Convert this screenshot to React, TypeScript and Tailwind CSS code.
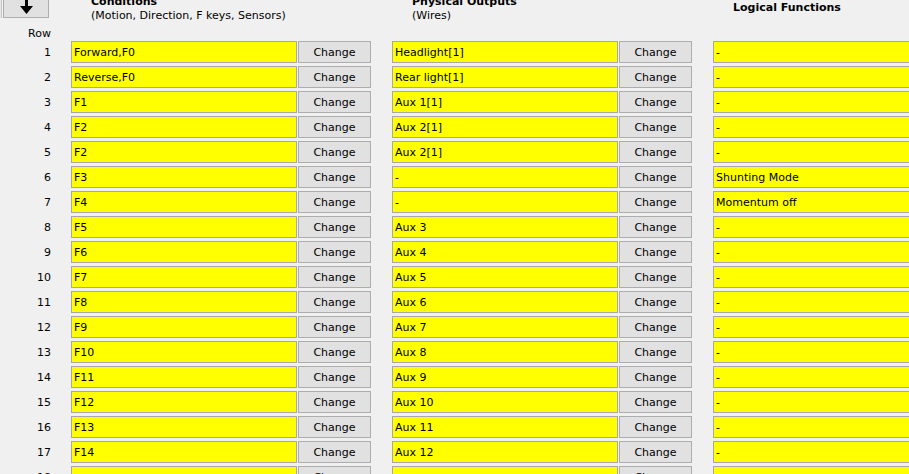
import React from "react";

type RowData = { n: number; cond: string; out: string; fn: string };

const rows: RowData[] = [
  { n: 1, cond: "Forward,F0", out: "Headlight[1]", fn: "-" },
  { n: 2, cond: "Reverse,F0", out: "Rear light[1]", fn: "-" },
  { n: 3, cond: "F1", out: "Aux 1[1]", fn: "-" },
  { n: 4, cond: "F2", out: "Aux 2[1]", fn: "-" },
  { n: 5, cond: "F2", out: "Aux 2[1]", fn: "-" },
  { n: 6, cond: "F3", out: "-", fn: "Shunting Mode" },
  { n: 7, cond: "F4", out: "-", fn: "Momentum off" },
  { n: 8, cond: "F5", out: "Aux 3", fn: "-" },
  { n: 9, cond: "F6", out: "Aux 4", fn: "-" },
  { n: 10, cond: "F7", out: "Aux 5", fn: "-" },
  { n: 11, cond: "F8", out: "Aux 6", fn: "-" },
  { n: 12, cond: "F9", out: "Aux 7", fn: "-" },
  { n: 13, cond: "F10", out: "Aux 8", fn: "-" },
  { n: 14, cond: "F11", out: "Aux 9", fn: "-" },
  { n: 15, cond: "F12", out: "Aux 10", fn: "-" },
  { n: 16, cond: "F13", out: "Aux 11", fn: "-" },
  { n: 17, cond: "F14", out: "Aux 12", fn: "-" },
  { n: 18, cond: "", out: "", fn: "" },
];

function Field({ text, className = "" }: { text: string; className?: string }) {
  return (
    <div
      className={`h-[22px] w-[226px] shrink-0 bg-[#ffff00] border border-[#a8a8a8] pl-[2px] pt-[1px] flex items-center whitespace-nowrap overflow-hidden ${className}`}
    >
      {text}
    </div>
  );
}

function ChangeButton() {
  return (
    <div className="ml-[1px] h-[22px] w-[73px] shrink-0 bg-[#e1e1e1] border border-[#adadad] pt-[1px] flex items-center justify-center">
      Change
    </div>
  );
}

export default function App() {
  return (
    <div className="w-[909px] h-[474px] overflow-hidden bg-[#f0f0f0] text-[11px] text-black font-['DejaVu_Sans',sans-serif] leading-[13px]">
      {/* header */}
      <div className="flex h-[41px]">
        <div className="w-[71px] shrink-0 flex flex-col">
          <div className="flex">
            <div className="w-[2px] h-[18px] bg-[#e6e6e6] border-r border-[#c8c8c8]" />
            <div className="ml-[1px] mt-[-5px] h-[23px] w-[46px] bg-[#e1e1e1] border border-[#adadad] flex items-end justify-center pb-[3px]">
              <svg width="13" height="19" viewBox="0 0 13 19">
                <rect x="5" y="0" width="3" height="13" fill="#000" />
                <polygon points="0,11 13,11 6.5,19" fill="#000" />
              </svg>
            </div>
          </div>
          <div className="mt-[9px] pr-[20px] text-right">Row</div>
        </div>
        <div className="w-[300px] shrink-0 pl-[20px] mt-[-5px] leading-[14px]">
          <div className="font-bold">Conditions</div>
          <div>(Motion, Direction, F keys, Sensors)</div>
        </div>
        <div className="ml-[21px] w-[300px] shrink-0 pl-[20px] mt-[-5px] leading-[14px]">
          <div className="font-bold">Physical Outputs</div>
          <div>(Wires)</div>
        </div>
        <div className="ml-[21px] shrink-0 pl-[20px] mt-[1px] leading-[14px]">
          <div className="font-bold">Logical Functions</div>
        </div>
      </div>
      {/* rows */}
      <div className="flex flex-col gap-[3px]">
        {rows.map((r) => (
          <div key={r.n} className="flex items-center h-[22px]">
            <div className="w-[71px] shrink-0 pr-[20px] pt-[1px] text-right">{r.n}</div>
            <Field text={r.cond} />
            <ChangeButton />
            <Field text={r.out} className="ml-[21px]" />
            <ChangeButton />
            <Field text={r.fn} className="ml-[21px]" />
          </div>
        ))}
      </div>
    </div>
  );
}
